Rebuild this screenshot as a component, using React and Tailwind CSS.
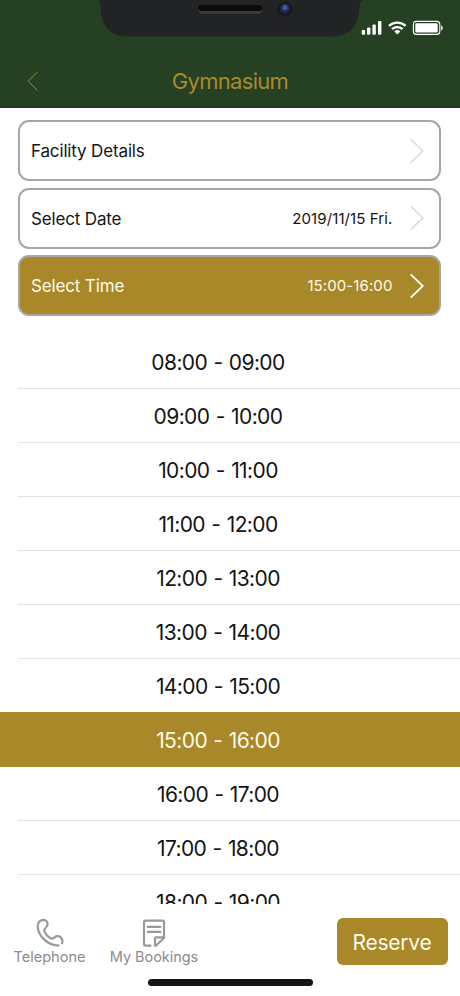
import React, { useState } from "react";
import clsx from "clsx";

const times = [
  "08:00 - 09:00",
  "09:00 - 10:00",
  "10:00 - 11:00",
  "11:00 - 12:00",
  "12:00 - 13:00",
  "13:00 - 14:00",
  "14:00 - 15:00",
  "15:00 - 16:00",
  "16:00 - 17:00",
  "17:00 - 18:00",
  "18:00 - 19:00",
];

const Notch = () => (
  <svg
    className="absolute left-0 top-0"
    width="460"
    height="40"
    viewBox="0 0 460 40"
    fill="none"
  >
    <path
      d="M97 0C99.500 1 100.500 3 100.500 7C101 25 110 36.500 128 36.500H332C350 36.500 359 25 359.500 7C359.500 3 360.500 1 363 0Z"
      fill="#222324"
    />
    <rect x="198" y="5" width="64" height="9" rx="4.500" fill="#3a3b3c" />
    <rect x="198" y="5" width="64" height="6" rx="3" fill="#0b0b0c" />
    <circle cx="285" cy="9" r="7.500" fill="#191a1f" />
    <circle cx="285" cy="8.500" r="4.500" fill="#222c5c" />
    <circle cx="285" cy="7.500" r="2.500" fill="#4658a0" />
  </svg>
);

const StatusIcons = () => (
  <svg
    className="absolute left-[360px] top-[18px]"
    width="86"
    height="20"
    viewBox="0 0 86 20"
    fill="none"
  >
    <g fill="#fff">
      <rect x="1.700" y="12" width="3.400" height="4.700" rx="1" />
      <rect x="7" y="9.500" width="3.400" height="7.200" rx="1" />
      <rect x="12.400" y="6.500" width="3.400" height="10.200" rx="1" />
      <rect x="18" y="3" width="3.400" height="13.700" rx="1" />
      <path d="M37.300 16.600L34.300 13.500A4.400 4.400 0 0 1 40.300 13.500Z" />
      <rect x="55.300" y="5.200" width="22.400" height="9.400" rx="1.400" />
      <path d="M81.200 7.200C83.200 7.900 83.200 11.900 81.200 12.600Z" />
    </g>
    <path
      d="M29 7.900A12 12 0 0 1 45.600 7.900M32 11.200A7.700 7.700 0 0 1 42.600 11.200"
      stroke="#fff"
      strokeWidth="2.300"
    />
    <rect
      x="53.400"
      y="3.400"
      width="26.400"
      height="13"
      rx="3"
      stroke="#fff"
      strokeWidth="1.100"
    />
  </svg>
);

const Chevron = ({ active }) => (
  <svg
    className="ml-[17.5px]"
    width="14"
    height="26"
    viewBox="0 0 14 26"
    fill="none"
    stroke={active ? "#fff" : "#d9d9d9"}
    strokeWidth={active ? "1.800" : "1.500"}
  >
    <path d="M0.700 1.300L12.800 13L0.700 24.700" />
  </svg>
);

const Card = ({ label, value, active }) => (
  <button
    className={clsx(
      "flex h-[61px] w-full items-center rounded-[11px] border-[2.5px] border-[#a6a6a6] pl-[11px] pr-[15px]",
      active ? "bg-[#a88828] text-[#fffbe8]" : "bg-white text-[#141414]"
    )}
  >
    <span className="flex-1 pt-[3px] text-left text-[17px] tracking-[-0.15px]">
      {label}
    </span>
    <span className="pt-[2px] text-[15px] tracking-[0.1px]">{value}</span>
    <Chevron active={active} />
  </button>
);

const TelephoneIcon = () => (
  <svg width="30" height="30" viewBox="0 0 30 30" fill="none">
    <path
      d="M27.200 25.200C28.300 20.500 25 17.800 22 18.200C19.500 18.500 18.700 21 16.600 20.600C13.500 19.600 10 16 9.200 12.600C9 10.600 12.600 9 12.600 6C12.600 3.500 10.600 1.800 8.200 1.800C4.500 1.800 2.600 5 2.800 9.300C3.400 18.500 13 27.600 23.800 27.500"
      stroke="#999"
      strokeWidth="2.200"
      strokeLinecap="round"
      strokeLinejoin="round"
    />
  </svg>
);

const BookingsIcon = () => (
  <svg width="30" height="30" viewBox="0 0 30 30" fill="none">
    <path
      d="M11.500 27.700H6.300Q5 27.700 5 26.400V4.200Q5 2.700 6.500 2.700H23.500Q25 2.700 25 4.200V20L16.800 27.700H16V20.500Q16 19.300 17.200 19.300H24.500M8.800 8.900H21.400M8.800 13.900H21.400"
      stroke="#999"
      strokeWidth="2.200"
      strokeLinecap="round"
      strokeLinejoin="round"
    />
  </svg>
);

export default function App() {
  const [selected, setSelected] = useState("15:00 - 16:00");

  return (
    <div className="relative flex h-[996px] w-[460px] flex-col overflow-hidden bg-white font-['Inter',sans-serif]">
      <header className="relative h-[108px] shrink-0 border-b border-[#1e381c] bg-[#264023]">
        <Notch />
        <StatusIcons />
        <div className="flex items-center pt-[66px]">
          <svg
            className="ml-[27px] shrink-0"
            width="12"
            height="30"
            viewBox="0 0 12 30"
            fill="none"
          >
            <path
              d="M10.500 6L1.200 15.200L10.500 24.500"
              stroke="#a08b2b"
              strokeWidth="1"
            />
          </svg>
          <h1 className="flex-1 pr-[39px] text-center text-[22px] leading-[30px] tracking-[-0.7px] text-[#a88a2b]">
            Gymnasium
          </h1>
        </div>
      </header>

      <div className="flex shrink-0 flex-col gap-[6.5px] pl-[18px] pr-[19px] pt-[12px]">
        <Card label="Facility Details" />
        <Card label="Select Date" value="2019/11/15 Fri." />
        <Card label="Select Time" value="15:00-16:00" active />
      </div>

      <ul className="mt-[19px] min-h-0 flex-1 overflow-hidden">
        {times.map((time) => (
          <li
            key={time}
            onClick={() => setSelected(time)}
            className={clsx(
              "cursor-pointer pl-[18px]",
              time === selected
                ? "relative -mt-px h-[55px] bg-[#a88828] text-[#fffbe8]"
                : "h-[54px] text-[#141414]"
            )}
          >
            <div
              className={clsx(
                "flex h-full items-center justify-center border-b pr-[42px] text-[21px] tracking-[-0.6px] [word-spacing:1px]",
                time === selected
                  ? "border-[#a88828] pt-[3px]"
                  : "border-[#e2e2e2] pt-[2px]"
              )}
            >
              {time}
            </div>
          </li>
        ))}
      </ul>

      <footer className="relative flex h-[92px] shrink-0 items-start bg-white pl-[14px] pr-[12.5px] text-[#8c8c8c]">
        <div className="flex w-[71px] flex-col items-center pt-[14px]">
          <TelephoneIcon />
          <span className="whitespace-nowrap text-[14.500px] leading-[18px]">
            Telephone
          </span>
        </div>
        <div className="ml-[25px] flex w-[88px] flex-col items-center pt-[14px]">
          <BookingsIcon />
          <span className="whitespace-nowrap text-[14.500px] leading-[18px] tracking-[-0.05px]">
            My Bookings
          </span>
        </div>
        <button className="ml-auto mt-[14px] h-[47px] w-[111px] rounded-[6px] bg-[#a88828] pt-[2px] text-[21px] tracking-[-0.25px] text-[#fffbe8]">
          Reserve
        </button>
        <div className="absolute left-[148px] top-[75px] h-[7px] w-[165px] rounded-full bg-[#141414]" />
      </footer>
    </div>
  );
}
